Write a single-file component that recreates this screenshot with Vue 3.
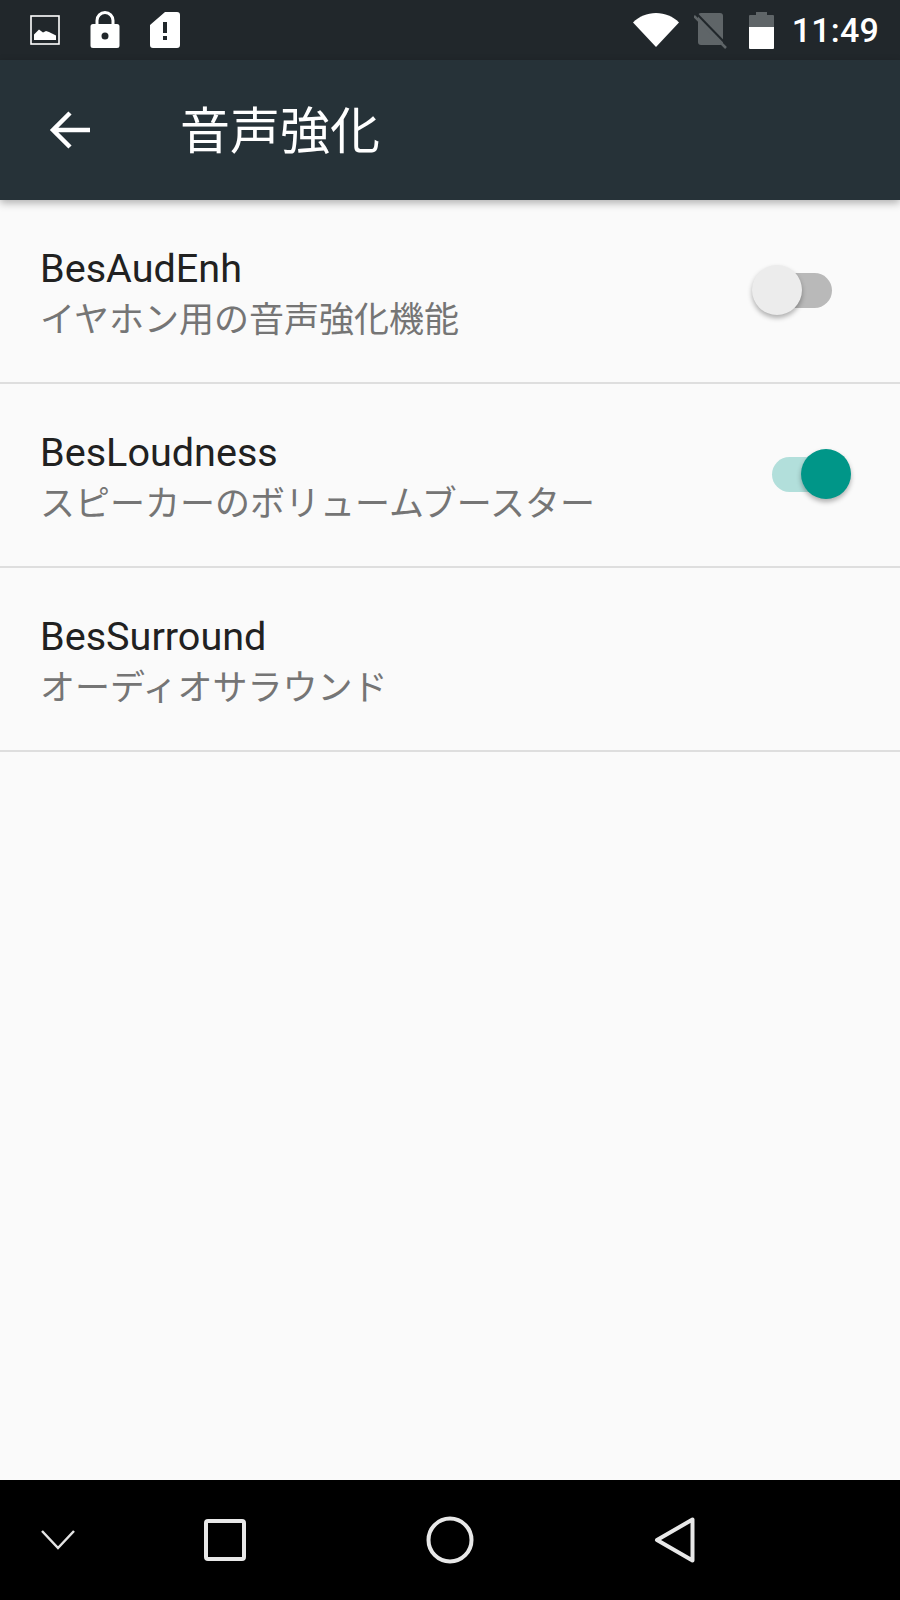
<script setup>
const items = [
  { id: 1, title: 'BesAudEnh', sub: 'イヤホン用の音声強化機能', toggle: 'off' },
  { id: 2, title: 'BesLoudness', sub: 'スピーカーのボリュームブースター', toggle: 'on' },
  { id: 3, title: 'BesSurround', sub: 'オーディオサラウンド', toggle: null },
]
</script>

<template>
  <div class="screen">
    <div class="status">
      <div class="status-left">
        <svg class="ic-pic" width="30" height="30" viewBox="0 0 30 30">
          <rect x="1" y="1" width="28" height="28" fill="none" stroke="#fff" stroke-width="1.6" />
          <path d="M4 25v-5.500l5-5 4 3 3-1.500 3 1 3 1.500 4 2V25z" fill="#fff" />
        </svg>
        <svg class="ic-lock" width="30" height="38" viewBox="0 0 30 38">
          <path fill="#fff" fill-rule="evenodd" d="M3 13h2.500V9.500a9.500 9.500 0 0 1 19 0V13H27a2.500 2.500 0 0 1 2.500 2.500v19A2.500 2.500 0 0 1 27 37H3a2.500 2.500 0 0 1-2.500-2.500v-19A2.500 2.500 0 0 1 3 13zM8.500 13h13V9.500a6.500 6.500 0 0 0-13 0zM15 21.500a3.500 3.500 0 1 0 0 7 3.500 3.500 0 0 0 0-7z" />
        </svg>
        <svg class="ic-sim" width="30" height="36" viewBox="0 0 30 36">
          <path fill="#fff" fill-rule="evenodd" d="M15 0h12a3 3 0 0 1 3 3v30a3 3 0 0 1-3 3H3a3 3 0 0 1-3-3V13zM13 10v11h4V10zM13 24v4h4v-4z" />
        </svg>
      </div>
      <div class="status-right">
        <svg class="ic-wifi" width="46" height="36" viewBox="0 0 46 36">
          <path fill="#fff" d="M0 10.500C6 4.500 14 1 23 1s17 3.500 23 9.500L23 35z" />
        </svg>
        <svg class="ic-nosim" width="34" height="38" viewBox="0 0 34 38">
          <rect x="4" y="2" width="25" height="32" rx="3" fill="#5f6568" />
          <path stroke="#21272b" stroke-width="2" d="M3 3l31 32" />
          <path stroke="#5f6568" stroke-width="2.500" d="M0 5l32 32" />
        </svg>
        <svg class="ic-batt" width="25" height="38" viewBox="0 0 25 38">
          <path fill="#5f6568" d="M7 1h11v3h6a1 1 0 0 1 1 1v13H0V5a1 1 0 0 1 1-1h6z" />
          <path fill="#fff" d="M0 16h25v21a1 1 0 0 1-1 1H1a1 1 0 0 1-1-1z" />
        </svg>
        <span class="time">11:49</span>
      </div>
    </div>

    <header class="toolbar">
      <svg class="back" width="41" height="40" viewBox="0 0 41 40">
        <path d="M41 20H4M21 3L4 20 21 37" fill="none" stroke="#fff" stroke-width="4.500" />
      </svg>
      <h1 class="page-title">音声強化</h1>
    </header>

    <main class="list">
      <div v-for="item in items" :key="item.id" class="row">
        <div class="row-text">
          <div class="row-title">{{ item.title }}</div>
          <div class="row-sub">{{ item.sub }}</div>
        </div>
        <div v-if="item.toggle" class="switch" :class="item.toggle">
          <span class="thumb"></span>
        </div>
      </div>
    </main>

    <nav class="navbar">
      <svg class="nav-down" width="36" height="22" viewBox="0 0 36 22">
        <path d="M2 2l16 17L34 2" fill="none" stroke="#e4e4e4" stroke-width="2.500" />
      </svg>
      <svg class="nav-square" width="42" height="42" viewBox="0 0 42 42">
        <rect x="2" y="2" width="38" height="38" rx="2" fill="none" stroke="#e8e8e8" stroke-width="4" />
      </svg>
      <svg class="nav-circle" width="48" height="48" viewBox="0 0 48 48">
        <circle cx="24" cy="24" r="21.500" fill="none" stroke="#e8e8e8" stroke-width="4" />
      </svg>
      <svg class="nav-back" width="42" height="48" viewBox="0 0 42 48">
        <path d="M38.500 3.500v41L3 24z" fill="none" stroke="#e8e8e8" stroke-width="4" stroke-linejoin="round" />
      </svg>
    </nav>
  </div>
</template>

<style>
html, body {
  margin: 0;
  background: #fafafa;
}
</style>

<style scoped>
.screen {
  width: 900px;
  height: 1600px;
  display: flex;
  flex-direction: column;
  background: #fafafa;
  overflow: hidden;
}

.status {
  height: 60px;
  flex: none;
  background: #21272b;
  display: flex;
  justify-content: space-between;
  align-items: center;
}

.status-left {
  display: flex;
  align-items: center;
  gap: 30px;
  padding-left: 30px;
}

.status-right {
  display: flex;
  align-items: center;
  padding-right: 21px;
}

.ic-nosim {
  margin-left: 15px;
}

.ic-batt {
  margin-left: 21px;
}

.time {
  margin-left: 18px;
  color: #fff;
  font: 500 34px Roboto, sans-serif;
  letter-spacing: 0.2px;
}

.toolbar {
  height: 140px;
  flex: none;
  background: #263238;
  display: flex;
  align-items: center;
  padding-left: 49px;
  box-sizing: border-box;
  box-shadow: 0 3px 8px rgba(0, 0, 0, 0.3);
  position: relative;
  z-index: 1;
}

.page-title {
  margin: 0 0 6px 90px;
  color: #fff;
  font: 400 50px "Noto Sans CJK JP", sans-serif;
}

.list {
  flex: 1;
}

.row {
  height: 184px;
  box-sizing: border-box;
  border-bottom: 2px solid #dedede;
  display: flex;
  align-items: center;
  justify-content: space-between;
  padding: 0 68px 0 40px;
}

.row-text {
  padding-top: 4px;
}

.row-title {
  font: 400 39.6px/48px Roboto, sans-serif;
  color: #212121;
}

.row-sub {
  font: 400 35px/48px "Noto Sans CJK JP", sans-serif;
  color: #757575;
}

.switch {
  width: 60px;
  height: 35px;
  margin-bottom: 2px;
  border-radius: 18px;
  position: relative;
}

.switch.off {
  background: #b9b9b9;
}

.switch.on {
  background: #b2dfdb;
}

.thumb {
  position: absolute;
  top: -7.5px;
  width: 50px;
  height: 50px;
  border-radius: 50%;
  box-shadow: 0 3px 5px rgba(0, 0, 0, 0.3);
}

.off .thumb {
  left: -20px;
  background: #ececec;
}

.on .thumb {
  left: 29px;
  background: #009688;
}

.navbar {
  height: 120px;
  flex: none;
  background: #000;
  display: flex;
  align-items: center;
  padding-left: 40px;
}

.nav-square {
  margin-left: 128px;
}

.nav-circle {
  margin-left: 180px;
}

.nav-back {
  margin-left: 180px;
}
</style>
